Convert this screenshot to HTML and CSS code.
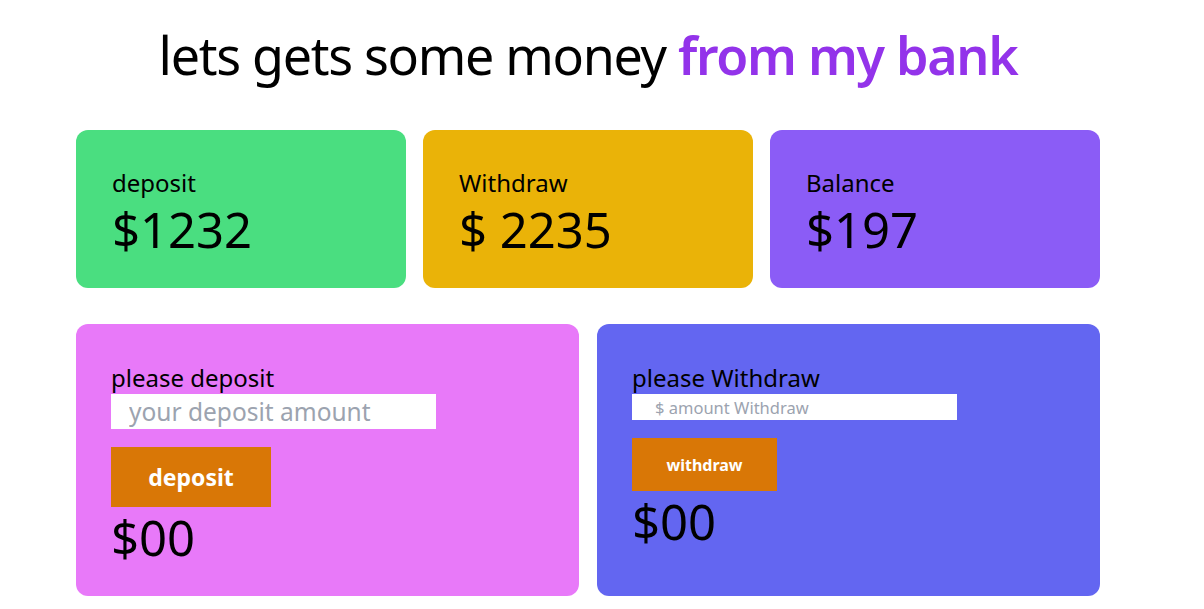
FILE: index.html
```html
<!DOCTYPE html>
<html lang="en">
<head>
<meta charset="utf-8">
<title>bank</title>
<link rel="stylesheet" href="styles.css">
</head>
<body>
<div class="page">
  <h1 class="title">lets gets some money <span class="accent">from my bank</span></h1>
  <div class="stats">
    <div class="card green">
      <div class="label">deposit</div>
      <div class="amount">$1232</div>
    </div>
    <div class="card yellow">
      <div class="label">Withdraw</div>
      <div class="amount">$ 2235</div>
    </div>
    <div class="card violet">
      <div class="label">Balance</div>
      <div class="amount">$197</div>
    </div>
  </div>
  <div class="actions">
    <div class="panel pink">
      <div class="label">please deposit</div>
      <input class="field big" type="text" placeholder="your deposit amount">
      <button class="btn big">deposit</button>
      <div class="amount">$00</div>
    </div>
    <div class="panel indigo">
      <div class="label">please Withdraw</div>
      <input class="field small" type="text" placeholder="$ amount Withdraw">
      <button class="btn small">withdraw</button>
      <div class="amount">$00</div>
    </div>
  </div>
</div>
</body>
</html>
```
FILE: styles.css
```css
* { box-sizing: border-box; }
html, body { margin: 0; padding: 0; background: #fff; }
body { font-family: "Noto Sans", "Open Sans", sans-serif; color: #000; }
.page { width: 1024px; margin-left: 76px; }
.title {
  margin: 0;
  padding-top: 23px;
  height: 130px;
  text-align: center;
  font-size: 52px;
  font-weight: 400;
  line-height: 64px;
  letter-spacing: -1.3px;
}
.accent { color: #9333ea; font-weight: 600; }
.stats { display: grid; grid-template-columns: repeat(3, 1fr); gap: 17px; }
.card {
  height: 158px;
  border-radius: 12px;
  padding: 37px 36px;
}
.green { background: #4ade80; }
.yellow { background: #eab308; }
.violet { background: #8b5cf6; }
.label { font-size: 24px; line-height: 32px; }
.amount { font-size: 49px; line-height: 60px; }
.actions { display: grid; grid-template-columns: 1fr 1fr; gap: 18px; margin-top: 36px; }
.panel {
  height: 272px;
  border-radius: 12px;
  padding: 38px 35px 0;
  display: flex;
  flex-direction: column;
  align-items: flex-start;
}
.panel > * { flex-shrink: 0; }
.pink { background: #e879f9; }
.indigo { background: #6366f1; }
.field {
  border: 0;
  outline: none;
  background: #fff;
  width: 325px;
  font-family: inherit;
  color: #000;
}
.field::placeholder { color: #9ca3af; }
.field.big { height: 35px; font-size: 24.5px; padding: 0 18px; margin-bottom: 18px; }
.field.small { height: 26px; font-size: 16.5px; padding: 0 23px; margin-bottom: 18px; }
.btn {
  border: 0;
  background: #d97706;
  color: #fff;
  font-family: inherit;
  font-weight: 700;
  padding: 0;
}
.btn.big { width: 160px; height: 60px; font-size: 23px; }
.btn.small { width: 145px; height: 53px; font-size: 16px; }
```
